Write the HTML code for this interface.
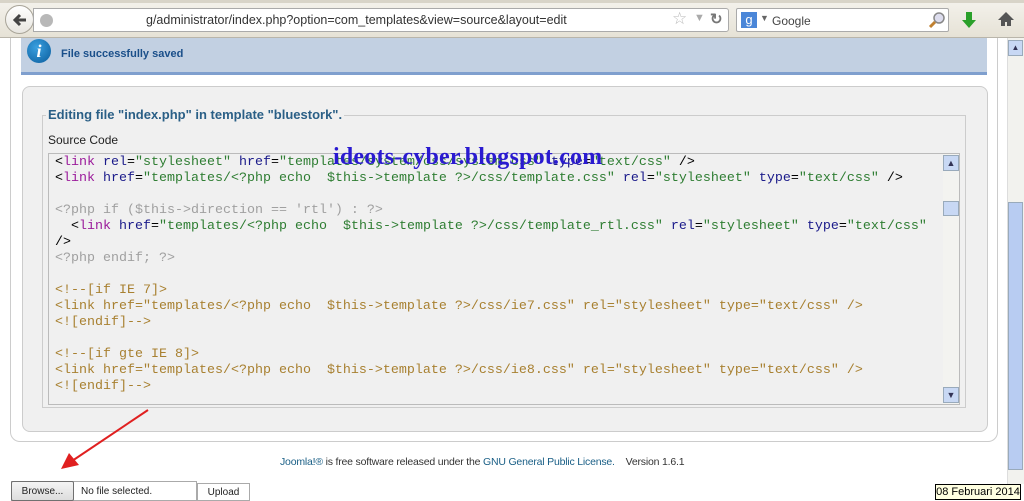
<!DOCTYPE html>
<html><head><meta charset="utf-8"><style>
*{margin:0;padding:0;box-sizing:border-box}
body{width:1024px;height:500px;overflow:hidden;background:#fff;position:relative;font-family:"Liberation Sans",sans-serif}
.a{position:absolute}
.code{font-family:"Liberation Mono",monospace;font-size:13.33px;line-height:16px;white-space:pre;color:#000}
.t{color:#9b1b9b}.n{color:#1a1a8a}.s{color:#2e7d32}.c{color:#a0a0a0}.k{color:#a88030}
</style></head><body>
<div class="a" style="left:0;top:0;width:1024px;height:38px;background:linear-gradient(#f4f2ec,#e6e2d6);border-bottom:1px solid #b9b5aa"></div>
<div class="a" style="left:0;top:0;width:1024px;height:3px;background:#d8d4c8"></div>
<div class="a" style="left:5px;top:5px;width:29px;height:29px;border-radius:50%;background:linear-gradient(#fff,#e8e6e0);border:1px solid #a8a498"></div>
<svg class="a" style="left:11px;top:11px" width="18" height="18"><path d="M15 9H5M9 4L4 9l5 5" stroke="#444" stroke-width="3" fill="none"/></svg>
<div class="a" style="left:33px;top:8px;width:696px;height:24px;background:#fff;border:1px solid #aaa;border-radius:0 3px 3px 0"></div>
<div class="a" style="left:40px;top:14px;width:13px;height:13px;border-radius:50%;background:#b8b8b8"></div>
<div class="a" style="left:146px;top:13px;font-size:12.5px;color:#333">g/administrator/index.php?option=com_templates&amp;view=source&amp;layout=edit</div>
<div class="a" style="left:672px;top:9px;font-size:17px;color:#bbb">☆</div>
<div class="a" style="left:694px;top:12px;font-size:11px;color:#aaa">▼</div>
<div class="a" style="left:710px;top:10px;font-size:15px;color:#777;font-weight:bold">↻</div>
<div class="a" style="left:736px;top:8px;width:213px;height:24px;background:#fff;border:1px solid #aaa;border-radius:2px"></div>
<div class="a" style="left:741px;top:12px;width:16px;height:16px;background:#4a86d8;color:#fff;font-size:13px;text-align:center;line-height:16px">g</div>
<div class="a" style="left:760px;top:13px;font-size:9px;color:#666">▼</div>
<div class="a" style="left:772px;top:14px;font-size:12px;color:#444">Google</div>
<svg class="a" style="left:928px;top:11px" width="18" height="18"><circle cx="11" cy="7" r="5" fill="#dde" stroke="#888" stroke-width="1.5"/><path d="M7 11L2 16" stroke="#c08030" stroke-width="3"/></svg>
<svg class="a" style="left:961px;top:11px" width="16" height="18"><path d="M5 1h6v8h4l-7 8-7-8h4z" fill="#2aa02a"/></svg>
<svg class="a" style="left:997px;top:11px" width="18" height="16"><path d="M9 1L1 9h3v6h4v-4h2v4h4V9h3z" fill="#555"/></svg>
<div class="a" style="left:10px;top:38px;width:988px;height:404px;border:1px solid #ccc;border-top:none;border-radius:0 0 10px 10px"></div>
<div class="a" style="left:21px;top:38px;width:966px;height:37px;background:#c2d0e2;border-bottom:3px solid #7f9fce"></div>
<div class="a" style="left:27px;top:39px;width:24px;height:24px;border-radius:50%;background:radial-gradient(circle at 40% 35%,#3aa0e0,#0a5c9c);color:#fff;font:bold italic 18px 'Liberation Serif',serif;text-align:center;line-height:24px">i</div>
<div class="a" style="left:61px;top:48px;font-size:11px;font-weight:bold;color:#1a4f8a">File successfully saved</div>
<div class="a" style="left:22px;top:86px;width:966px;height:346px;background:#f0f0f0;border:1px solid #ccc;border-radius:8px"></div>
<div class="a" style="left:42px;top:115px;width:924px;height:293px;border:1px solid #ccc"></div>
<div class="a" style="left:46px;top:107px;background:#f0f0f0;padding:0 2px;font-size:13px;font-weight:bold;color:#2a5f86">Editing file "index.php" in template "bluestork".</div>
<div class="a" style="left:48px;top:133px;font-size:12px;color:#222">Source Code</div>
<div class="a" style="left:48px;top:153px;width:912px;height:252px;background:#f0f0f0;border:1px solid #bbb"></div>
<div class="a" style="left:943px;top:154px;width:16px;height:250px;background:#f3f3f0"></div>
<div class="a" style="left:943px;top:155px;width:16px;height:16px;background:#c8d8f4;border:1px solid #9ab;color:#335;font-size:9px;text-align:center;line-height:14px">▲</div>
<div class="a" style="left:943px;top:201px;width:16px;height:15px;background:#c8d8f4;border:1px solid #9ab"></div>
<div class="a" style="left:943px;top:387px;width:16px;height:16px;background:#c8d8f4;border:1px solid #9ab;color:#335;font-size:9px;text-align:center;line-height:14px">▼</div>
<div class="a code" style="left:55px;top:155px">&lt;<span class="t">link</span> <span class="n">rel</span>=<span class="s">"stylesheet"</span> <span class="n">href</span>=<span class="s">"templates/system/css/system.css"</span> <span class="n">type</span>=<span class="s">"text/css"</span> /&gt;
&lt;<span class="t">link</span> <span class="n">href</span>=<span class="s">"templates/&lt;?php echo  $this-&gt;template ?&gt;/css/template.css"</span> <span class="n">rel</span>=<span class="s">"stylesheet"</span> <span class="n">type</span>=<span class="s">"text/css"</span> /&gt;

<span class="c">&lt;?php if ($this-&gt;direction == 'rtl') : ?&gt;</span>
  &lt;<span class="t">link</span> <span class="n">href</span>=<span class="s">"templates/&lt;?php echo  $this-&gt;template ?&gt;/css/template_rtl.css"</span> <span class="n">rel</span>=<span class="s">"stylesheet"</span> <span class="n">type</span>=<span class="s">"text/css"</span>
/&gt;
<span class="c">&lt;?php endif; ?&gt;</span>

<span class="k">&lt;!--[if IE 7]&gt;
&lt;link href="templates/&lt;?php echo  $this-&gt;template ?&gt;/css/ie7.css" rel="stylesheet" type="text/css" /&gt;
&lt;![endif]--&gt;

&lt;!--[if gte IE 8]&gt;
&lt;link href="templates/&lt;?php echo  $this-&gt;template ?&gt;/css/ie8.css" rel="stylesheet" type="text/css" /&gt;
&lt;![endif]--&gt;</span></div>
<div class="a" style="left:333px;top:144px;font:bold 24px 'Liberation Serif',serif;color:#2a1ad0;letter-spacing:0.2px">ideots-cyber.blogspot.com</div>
<div class="a" style="left:280px;top:456px;font-size:10.5px;color:#333;letter-spacing:-0.2px"><span style="color:#1a5f86">Joomla!®</span> is free software released under the <span style="color:#1a5f86">GNU General Public License.</span> &nbsp;&nbsp; Version 1.6.1</div>
<div class="a" style="left:11px;top:481px;width:186px;height:20px;border:1px solid #aaa;background:#fff"></div>
<div class="a" style="left:11px;top:481px;width:63px;height:20px;border:1px solid #707070;border-radius:2px;background:linear-gradient(#f4f4f4,#ddd);font-size:10px;text-align:center;line-height:19px;color:#222">Browse...</div>
<div class="a" style="left:81px;top:486px;font-size:10px;color:#222">No file selected.</div>
<div class="a" style="left:197px;top:483px;width:53px;height:18px;border:1px solid #aaa;background:#fff;font-size:10px;text-align:center;line-height:17px;color:#222">Upload</div>
<div class="a" style="left:935px;top:484px;width:86px;height:16px;border:1px solid #000;background:#ffffe1;font-size:11px;text-align:center;line-height:15px;color:#000">08 Februari 2014</div>
<div class="a" style="left:1007px;top:38px;width:17px;height:446px;background:#f2f2ee;border-left:1px solid #ddd"></div>
<div class="a" style="left:1008px;top:40px;width:15px;height:16px;background:#c8d8f4;border:1px solid #9ab;color:#335;font-size:8px;text-align:center;line-height:14px">▲</div>
<div class="a" style="left:1008px;top:202px;width:15px;height:268px;background:#b8ccf2;border:1px solid #9ab"></div>
<svg class="a" style="left:55px;top:405px" width="100" height="70"><path d="M93 5L14 58" stroke="#e02020" stroke-width="2"/><path d="M6 64L14 48L24 60Z" fill="#e02020"/></svg>
</body></html>
